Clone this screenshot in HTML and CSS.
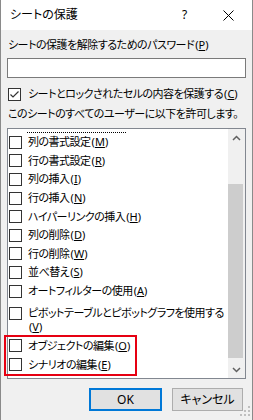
FILE: index.html
```html
<!DOCTYPE html>
<html lang="ja">
<head>
    <meta charset="UTF-8">
    <title>シートの保護</title>
    <link rel="stylesheet" href="styles.css">
</head>
<body>
    <div class="dialog">
        <header class="titlebar">
            <span class="title">シートの保護</span>
            <span class="help">?</span>
            <svg class="close" width="11" height="11" viewBox="0 0 11 11">
                <path d="M0.5 0.5 L10.5 10.5 M10.5 0.5 L0.5 10.5" stroke="#000" stroke-width="1"/>
            </svg>
        </header>

        <main class="content">
            <div class="label">シートの保護を解除するためのパスワード<span class="key">(<u>P</u>)</span></div>
            <div class="input"></div>

            <div class="check-row">
                <span class="box">
                    <svg width="11" height="11" viewBox="0 0 11 11">
                        <path d="M1.5 5.5 L4 8 L9.5 2.5" fill="none" stroke="#333" stroke-width="1.2"/>
                    </svg>
                </span>
                <span>シートとロックされたセルの内容を保護する<span class="key">(<u>C</u>)</span></span>
            </div>

            <div class="label">このシートのすべてのユーザーに以下を許可します。</div>

            <div class="list">
                <div class="items">
                    <div class="focus-edge"></div>
                    <div class="item"><span class="box"></span><span>列の書式設定<span class="key">(<u>M</u>)</span></span></div>
                    <div class="item"><span class="box"></span><span>行の書式設定<span class="key">(<u>R</u>)</span></span></div>
                    <div class="item"><span class="box"></span><span>列の挿入<span class="key">(<u>I</u>)</span></span></div>
                    <div class="item"><span class="box"></span><span>行の挿入<span class="key">(<u>N</u>)</span></span></div>
                    <div class="item"><span class="box"></span><span>ハイパーリンクの挿入<span class="key">(<u>H</u>)</span></span></div>
                    <div class="item"><span class="box"></span><span>列の削除<span class="key">(<u>D</u>)</span></span></div>
                    <div class="item"><span class="box"></span><span>行の削除<span class="key">(<u>W</u>)</span></span></div>
                    <div class="item"><span class="box"></span><span>並べ替え<span class="key">(<u>S</u>)</span></span></div>
                    <div class="item"><span class="box"></span><span>オートフィルターの使用<span class="key">(<u>A</u>)</span></span></div>
                    <div class="item item-tall"><span class="box"></span><span>ピボットテーブルとピボットグラフを使用する<br><span class="key">(<u>V</u>)</span></span></div>
                    <div class="item"><span class="box"></span><span>オブジェクトの編集<span class="key">(<u>O</u>)</span></span></div>
                    <div class="item"><span class="box"></span><span>シナリオの編集<span class="key">(<u>E</u>)</span></span></div>
                </div>
                <div class="scrollbar">
                    <div class="arrow">
                        <svg width="9" height="6" viewBox="0 0 9 6"><path d="M1 5 L4.5 1.5 L8 5" fill="none" stroke="#606060" stroke-width="1.5"/></svg>
                    </div>
                    <div class="track"><div class="thumb"></div></div>
                    <div class="arrow">
                        <svg width="9" height="6" viewBox="0 0 9 6"><path d="M1 1 L4.5 4.5 L8 1" fill="none" stroke="#606060" stroke-width="1.5"/></svg>
                    </div>
                </div>
            </div>

            <div class="buttons">
                <div class="btn btn-default">OK</div>
                <div class="btn">キャンセル</div>
            </div>
        </main>

        <!-- annotation over the last two options -->
        <div class="highlight"></div>

        <svg class="grip" width="12" height="12" viewBox="0 0 12 12">
            <rect x="9" y="1" width="2" height="2" fill="#bfbfbf"/>
            <rect x="5" y="5" width="2" height="2" fill="#bfbfbf"/>
            <rect x="9" y="5" width="2" height="2" fill="#bfbfbf"/>
            <rect x="1" y="9" width="2" height="2" fill="#bfbfbf"/>
            <rect x="5" y="9" width="2" height="2" fill="#bfbfbf"/>
            <rect x="9" y="9" width="2" height="2" fill="#bfbfbf"/>
        </svg>
    </div>
</body>
</html>
```

FILE: styles.css
```css
body {
    margin: 0;
    font-family: "Noto Sans", "Noto Sans CJK JP", sans-serif;
    font-size: 11px;
    line-height: 14px;
    letter-spacing: -0.5px;
    font-feature-settings: "palt";
    color: #000;
}

u {
    text-underline-offset: 1px;
}

.key {
    letter-spacing: 0;
    margin-left: 1px;
}

.dialog {
    position: relative;
    width: 253px;
    height: 420px;
    box-sizing: border-box;
    border-left: 1px solid #8a8a8a;
    border-right: 1px solid #8a8a8a;
    background-color: #f0f0f0;
    overflow: hidden;
}

.titlebar {
    display: flex;
    align-items: center;
    height: 30px;
    background-color: #fff;
    padding-left: 9px;
}

.title {
    flex: 1;
    font-size: 12px;
    letter-spacing: 0;
}

.help {
    width: 8px;
    margin-right: 33px;
    font-size: 12px;
    letter-spacing: 0;
}

.close {
    margin-right: 18px;
}

.content {
    padding: 0 6px;
}

.label {
    margin-top: 8px;
    padding-left: 1px;
    white-space: nowrap;
}

.label + .input {
    margin-top: 6px;
}

.input {
    height: 20px;
    box-sizing: border-box;
    border: 1px solid #7a7a7a;
    background-color: #fff;
}

.check-row {
    display: flex;
    align-items: center;
    gap: 7px;
    margin-top: 9px;
    padding-left: 1px;
    white-space: nowrap;
}

.check-row + .label {
    margin-top: 6px;
}

.box {
    display: flex;
    align-items: center;
    justify-content: center;
    width: 13px;
    height: 13px;
    box-sizing: border-box;
    border: 1px solid #333;
    background-color: #fff;
    flex-shrink: 0;
}

.list {
    display: flex;
    margin-top: 7px;
    height: 251px;
    box-sizing: border-box;
    border: 1px solid #828790;
    background-color: #fff;
}

.items {
    flex: 1;
    overflow: hidden;
    padding-top: 3px;
    white-space: nowrap;
}

.focus-edge {
    margin-left: 19px;
    width: 99px;
    border-top: 1px dotted #000;
}

.item {
    display: flex;
    align-items: center;
    gap: 6px;
    height: 18.6px;
    padding-left: 1px;
}

.item-tall {
    align-items: flex-start;
    height: 36.3px;
    box-sizing: border-box;
    padding-top: 6px;
}

.item-tall .box {
    margin-top: 1px;
}

.scrollbar {
    display: flex;
    flex-direction: column;
    width: 17px;
    background-color: #f0f0f0;
}

.arrow {
    display: flex;
    align-items: center;
    justify-content: center;
    height: 17px;
}

.track {
    flex: 1;
    padding-top: 38px;
}

.thumb {
    width: 15px;
    height: 174px;
    background-color: #cdcdcd;
}

.buttons {
    display: flex;
    justify-content: flex-end;
    gap: 10px;
    margin-top: 9px;
    padding-right: 3px;
}

.btn {
    display: flex;
    align-items: center;
    justify-content: center;
    width: 71px;
    height: 23px;
    box-sizing: border-box;
    border: 1px solid #adadad;
    background-color: #e1e1e1;
    font-size: 12px;
    letter-spacing: 0;
}

.btn-default {
    width: 73px;
    border: 2px solid #0078d7;
}

.highlight {
    position: absolute;
    left: 3px;
    top: 335px;
    width: 133px;
    height: 41px;
    box-sizing: border-box;
    border: 2px solid #e60012;
}

.grip {
    position: absolute;
    right: 1px;
    bottom: 3px;
}
```
